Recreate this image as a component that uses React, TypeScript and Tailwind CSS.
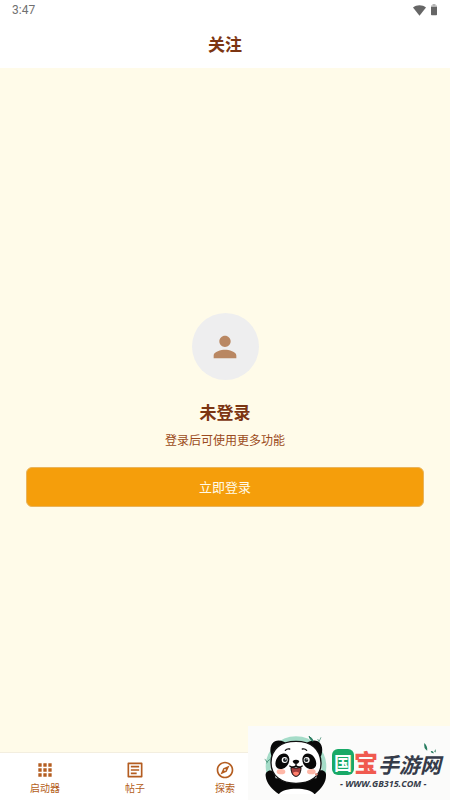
const tabs = [
  { label: "启动器", icon: "M4 8h4V4H4v4zm6 12h4v-4h-4v4zm-6 0h4v-4H4v4zm0-6h4v-4H4v4zm6 0h4v-4h-4v4zm6-10v4h4V4h-4zm-6 4h4V4h-4v4zm6 6h4v-4h-4v4zm0 6h4v-4h-4v4z" },
  { label: "帖子", icon: "M19 5v14H5V5h14m1.1-2H3.9c-.5 0-.9.4-.9.9v16.2c0 .4.4.9.9.9h16.2c.4 0 .9-.5.9-.9V3.9c0-.5-.5-.9-.9-.9zM11 7H7v2h10V7h-6zm6 4H7v2h10v-2zm-3 4H7v2h7v-2z" },
  { label: "探索", icon: "M12 2C6.48 2 2 6.48 2 12s4.48 10 10 10 10-4.48 10-10S17.52 2 12 2zm0 18c-4.41 0-8-3.59-8-8s3.59-8 8-8 8 3.59 8 8-3.59 8-8 8zm-5.5-2.5l7.51-3.49L17.5 6.5 9.99 9.99 6.5 17.5zm5.5-6.6c.61 0 1.1.49 1.1 1.1s-.49 1.1-1.1 1.1-1.1-.49-1.1-1.1.49-1.1 1.1-1.1z" },
];

const StatusBar = () => (
  <div className="flex h-5 items-center justify-between px-3 text-[#707070]">
    <span className="font-['Roboto',sans-serif] text-[12px] leading-5">3:47</span>
    <div className="flex items-center gap-1">
      <svg viewBox="0 0 24 20" className="h-[11px] w-[13px]" fill="#666666">
        <path d="M12 19.5 0 4.5C3.5 1.8 7.5.5 12 .5s8.500 1.300 12 4z" />
      </svg>
      <svg viewBox="0 0 10 16" className="h-3 w-2" fill="#666666">
        <path d="M3 0h4v2h2v3H1V2h2z" fill="#b5b5b5" />
        <path d="M1 4h8v10q0 1-1 1H2q-1 0-1-1z" />
      </svg>
    </div>
  </div>
);

// Panda mascot with the mint ring behind it
const Panda = () => (
  <svg viewBox="75 60 192 180" className="h-[60px] w-16 shrink-0">
    <circle cx="171" cy="158" r="84" fill="#f5fbf8" stroke="#a5dcc8" strokeWidth="14" />
    <path d="M99 128c-9-17-5-40 9-46 11-5 28-1 36 8zM245 128c9-17 5-40-9-46-11-5-28-1-36 8z" fill="#080808" />
    <path d="M80 186c-2-12 10-20 20-15 6 4 8 13 10 22h122c1-10 3-20 9-23 10-5 22 3 20 15 0 21-13 37-33 55H119c-20-14-37-32-39-54z" fill="#080808" />
    <path d="M120 240c13-21 91-21 106 0z" fill="#fff" />
    <path d="M171 82c46 0 73 23 75 64 2 40-32 62-75 62s-75-22-75-62c0-41 29-64 75-64z" fill="#fff" stroke="#111" strokeWidth="4" />
    <path d="M118 127c12-14 31-9 33 7 1 18-13 32-28 31-18-2-17-24-5-38zM223 127c-12-14-31-9-33 7-1 18 13 32 28 31 18-2 17-24 5-38z" fill="#080808" />
    <circle cx="137" cy="138" r="9" fill="#fff" />
    <circle cx="138" cy="138" r="6" fill="#20282b" />
    <circle cx="203" cy="138" r="9" fill="#fff" />
    <circle cx="202" cy="138" r="6" fill="#20282b" />
    <circle cx="140" cy="135" r="2" fill="#fff" />
    <circle cx="204" cy="135" r="2" fill="#fff" />
    <path d="M139 109q5-6 13-4M190 105q8-2 13 4" fill="none" stroke="#111" strokeWidth="4" strokeLinecap="round" />
    <path d="M161 141q10-7 20 0-2 9-10 9t-10-9z" fill="#080808" />
    <path d="M171 149v6m-20 0q11 8 20 0 9 8 20 0" fill="none" stroke="#080808" strokeWidth="4" />
    <path d="M156 160q15 5 30 0c0 18-7 27-15 27s-15-9-15-27z" fill="#a43d3c" stroke="#080808" strokeWidth="3" />
    <path d="M161 177q10-8 20 0-4 8-10 8t-10-8z" fill="#ff806c" />
    <ellipse cx="126" cy="173" rx="13" ry="8" fill="#ffb8a8" />
    <ellipse cx="217" cy="173" rx="13" ry="8" fill="#ffb8a8" />
    <circle cx="232" cy="181" r="4" fill="#dd8f80" />
    <path d="M210 67q2 8 11 15 2-8-11-15z" fill="#287d60" stroke="#287d60" strokeWidth="3" />
    <path d="M77 136q5 1 6 8M93 136q-8 4-10 12M236 75l4 8 6-13" fill="none" stroke="#287d60" strokeWidth="2" />
  </svg>
);

const SiteBadge = () => (
  <div className="absolute bottom-0 right-0 flex h-[74px] w-[202px] items-start bg-[#fbfbfa] pl-4 pt-2">
    <Panda />
    <div className="flex flex-col pt-3">
      <div className="flex h-8 items-center pl-1 font-['Noto_Sans_CJK_SC',sans-serif]">
        <span className="flex h-[26px] w-[22px] items-center justify-center rounded-md bg-[#18a967] text-[18px] font-bold text-white">国</span>
        <span className="text-[24px] font-black leading-8 text-[#f05a4f]">宝</span>
        <span className="pt-1 text-[21px] font-bold italic leading-7 text-[#353b49]">手游网</span>
      </div>
      <span className="pl-3 font-['Open_Sans',sans-serif] text-[9px] font-bold italic leading-3 text-[#353b49]">- WWW.GB315.COM -</span>
    </div>
    <svg viewBox="0 0 40 34" className="absolute right-3 top-4 h-3 w-4" fill="#287d60">
      <path d="M4 3q10 10 8 22Q1 18 4 3zM22 26q7-2 9 6-8 1-9-6zM32 27l4-7v10z" />
    </svg>
  </div>
);

const App = () => {
  return (
    <div className="relative flex min-h-screen flex-col bg-[#fffbe9] font-['Noto_Sans_CJK_SC',sans-serif] text-[#7c3512]">
      <header className="bg-white">
        <StatusBar />
        <div className="flex h-12 items-center justify-center">
          <h1 className="text-[17px] font-bold leading-6">关注</h1>
        </div>
      </header>

      {/* Signed-out state */}
      <main className="flex flex-1 flex-col items-center justify-center px-[26px]">
        <div className="flex h-[67px] w-[67px] items-center justify-center rounded-full bg-[#eeeeef]">
          <svg viewBox="0 0 24 24" className="h-[34px] w-[34px]" fill="#b98762">
            <path d="M12 12c2.210 0 4-1.790 4-4s-1.790-4-4-4-4 1.790-4 4 1.790 4 4 4zm0 2c-2.670 0-8 1.340-8 4v2h16v-2c0-2.660-5.330-4-8-4z" />
          </svg>
        </div>
        <h2 className="mt-5 text-[17px] font-bold leading-6">未登录</h2>
        <p className="mt-1 text-[12px] leading-6 text-[#9b4a20]">登录后可使用更多功能</p>
        <button type="button" className="mt-[15px] h-10 w-full rounded-md border border-[#e9b45c] bg-[#f59e0b] text-[13px] text-[#fffbe9]">
          立即登录
        </button>
      </main>

      <nav className="grid h-12 grid-cols-5 border-t border-[#f3eedf] bg-white text-[#b45d20]">
        {tabs.map((tab) => (
          <a key={tab.label} href="#" className="flex flex-col items-center pt-[7px]">
            <svg viewBox="0 0 24 24" className="h-5 w-5" fill="currentColor">
              <path d={tab.icon} />
            </svg>
            <span className="text-[10px] leading-4">{tab.label}</span>
          </a>
        ))}
      </nav>

      <SiteBadge />
    </div>
  );
};

export default App;
